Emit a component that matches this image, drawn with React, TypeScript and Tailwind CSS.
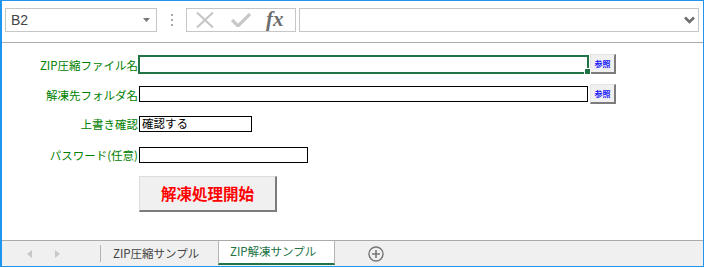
import React from "react";

const cjk = "font-['Noto_Sans_CJK_JP','Noto_Sans',sans-serif]";

function RefButton() {
  return (
    <div className="w-[26px] h-[20px] bg-[#f0f0f0] border-t border-l border-t-[#e4e4e4] border-l-[#e4e4e4] border-r-2 border-b-2 border-r-[#7c7c7c] border-b-[#7c7c7c] flex items-center justify-center">
      <span className={`${cjk} text-[8px] leading-none font-bold text-[#1010ff]`}>参照</span>
    </div>
  );
}

export default function App() {
  return (
    <div className="w-[705px] h-[268px] bg-white">
      <div className="w-[704px] h-[267px] border border-l-2 border-[#1e96f0] flex flex-col">
        {/* formula bar */}
        <div className="h-[42px] border-b border-[#ababab] flex items-start pt-[7px] shrink-0">
          <div className="ml-[3px] w-[152px] h-[24px] border border-[#c6c6c6] flex items-center justify-between pl-[5px] pr-[6px]">
            <span className="font-['Liberation_Sans',sans-serif] text-[14px] text-[#444444] leading-none">B2</span>
            <svg width="7" height="4" viewBox="0 0 7 4">
              <path d="M0 0 L7 0 L3.5 4 Z" fill="#777777" />
            </svg>
          </div>
          <div className="ml-[14px] h-[24px] flex flex-col justify-center gap-[3px]">
            <div className="w-[2px] h-[2px] bg-[#a8a8a8]" />
            <div className="w-[2px] h-[2px] bg-[#a8a8a8]" />
            <div className="w-[2px] h-[2px] bg-[#a8a8a8]" />
          </div>
          <div className="ml-[13px] w-[110px] h-[24px] border border-[#c6c6c6] flex items-center">
            <svg width="18" height="16" viewBox="0 0 18 16" className="ml-[9px]">
              <path d="M1 0.5 L17 15.5 M17 0.5 L1 15.5" stroke="#c4c4c4" strokeWidth="2" />
            </svg>
            <svg width="20" height="14" viewBox="0 0 20 14" className="ml-[17px]">
              <path d="M1 7 L7 13 L19 1" stroke="#c8c8c8" strokeWidth="3.2" fill="none" />
            </svg>
            <span className="ml-[15px] font-['Liberation_Serif',serif] italic font-bold text-[21px] leading-none text-[#6e6e6e] -mt-[2px]">
              fx
            </span>
          </div>
          <div className="ml-[3px] w-[400px] h-[24px] border border-[#c6c6c6] flex items-center justify-end pr-[3px]">
            <svg width="11" height="8" viewBox="0 0 11 8">
              <path d="M1 1.5 L5.5 6 L10 1.5" stroke="#6d6d6d" strokeWidth="2.6" fill="none" />
            </svg>
          </div>
        </div>

        {/* sheet */}
        <div className={`flex-1 ${cjk}`}>
          {/* row 1 */}
          <div className="flex h-[20px] mt-[11px]">
            <div className="w-[136px] text-right text-[11.5px] leading-[20px] text-[#008000] pt-[1px]">ZIP圧縮ファイル名</div>
            <div className="relative w-[451px] h-[19px] mt-[1px]">
              <div className="absolute inset-0 border-2 border-[#217346]" />
              <div className="absolute right-[-2px] bottom-[-1px] w-[7px] h-[7px] bg-[#217346] border border-white" />
            </div>
            <div className="ml-[1px]">
              <RefButton />
            </div>
          </div>
          {/* row 2 */}
          <div className="flex h-[20px] mt-[10px]">
            <div className="w-[136px] text-right text-[11.5px] leading-[20px] text-[#008000] pt-[1px]">解凍先フォルダ名</div>
            <div className="ml-[1px] w-[449px] h-[16px] mt-[2px] border border-black" />
            <div className="ml-[2px]">
              <RefButton />
            </div>
          </div>
          {/* row 3 */}
          <div className="flex h-[20px] mt-[10px]">
            <div className="w-[136px] text-right text-[11.5px] leading-[20px] text-[#008000]">上書き確認</div>
            <div className="ml-[1px] w-[113px] h-[16px] mt-[2px] border border-black flex items-center pl-[2px] text-[11.5px] leading-none text-black">
              確認する
            </div>
          </div>
          {/* row 4 */}
          <div className="flex h-[20px] mt-[11px]">
            <div className="w-[136px] text-right text-[11.5px] leading-[20px] text-[#008000]">パスワード(任意)</div>
            <div className="ml-[1px] w-[169px] h-[16px] mt-[2px] border border-black" />
          </div>
          {/* start button */}
          <div className="flex mt-[11px]">
            <div className="ml-[137px] w-[138px] h-[36px] bg-[#f0f0f0] border-t border-l border-t-[#dcdcdc] border-l-[#dcdcdc] border-r-2 border-b-2 border-r-[#7c7c7c] border-b-[#7c7c7c] flex items-center justify-center">
              <span className="text-[15.5px] font-bold text-[#ff0000] leading-none">解凍処理開始</span>
            </div>
          </div>
        </div>

        {/* sheet tabs */}
        <div className={`h-[26px] shrink-0 border-t border-[#ababab] bg-[#f0f0f0] flex items-stretch ${cjk}`}>
          <div className="w-[98px] flex items-center">
            <svg width="5" height="8" viewBox="0 0 5 8" className="ml-[25px]">
              <path d="M5 0 L0 4 L5 8 Z" fill="#c8c8c8" />
            </svg>
            <svg width="5" height="8" viewBox="0 0 5 8" className="ml-[23px]">
              <path d="M0 0 L5 4 L0 8 Z" fill="#c8c8c8" />
            </svg>
          </div>
          <div className="w-px bg-[#b4b4b4] my-[4px]" />
          <div className="w-[117px] flex items-center pl-[12px] text-[11.5px] text-[#444444]">ZIP圧縮サンプル</div>
          <div className="w-[117px] bg-white border-l border-r border-[#b4b4b4] flex items-center pl-[11px] text-[11.5px] text-[#217346] border-b-2 border-b-[#217346] mb-[1px]">
            ZIP解凍サンプル
          </div>
          <div className="ml-[33px] flex items-center">
            <svg width="16" height="16" viewBox="0 0 16 16">
              <circle cx="8" cy="8" r="7" stroke="#777777" strokeWidth="1.4" fill="none" />
              <path d="M8 4 V12 M4 8 H12" stroke="#777777" strokeWidth="1.6" />
            </svg>
          </div>
        </div>
      </div>
    </div>
  );
}
